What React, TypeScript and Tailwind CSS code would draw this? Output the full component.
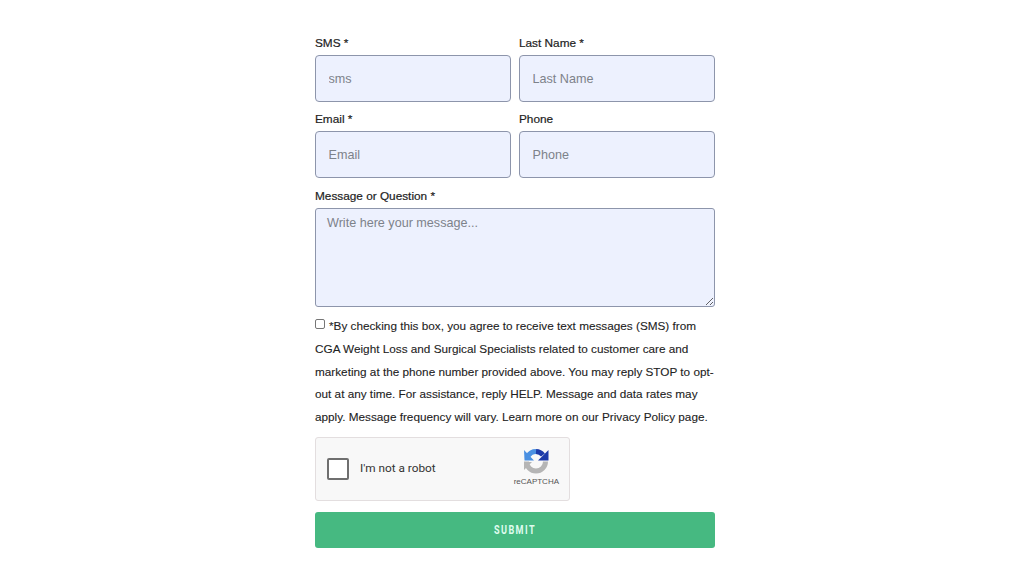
export default function App() {
  const label = "block text-[11.8px] leading-[14px] text-[#222] [-webkit-text-stroke:0.2px_#222]";
  const input = "mt-[5px] block w-full h-[47px] rounded-[4px] border-[1.5px] border-[#8d95ab] bg-[#edf1fe] pl-[12.5px] pr-[12px] text-[12.6px] text-[#333] placeholder:text-[#7d828a] outline-none";
  return (
    <div className="w-[1024px] h-[576px] bg-white flex justify-center overflow-hidden font-['Liberation_Sans',Arial,sans-serif]">
      <form className="w-[400px] pt-[36px] ml-[6px]">
        <div className="grid grid-cols-2 gap-x-[8px] gap-y-[10px]">
          <div>
            <label className={label}>SMS *</label>
            <input className={input} placeholder="sms" />
          </div>
          <div>
            <label className={label}>Last Name *</label>
            <input className={input} placeholder="Last Name" />
          </div>
          <div>
            <label className={label}>Email *</label>
            <input className={input} placeholder="Email" />
          </div>
          <div>
            <label className={label}>Phone</label>
            <input className={input} placeholder="Phone" />
          </div>
        </div>
        <label className={label + " mt-[11px]"}>Message or Question *</label>
        <textarea
          className="mt-[5px] block w-full h-[99px] rounded-[3px] border-[1.5px] border-[#8d95ab] bg-[#edf1fe] px-[11px] pt-[6px] text-[12.6px] leading-[17px] text-[#333] placeholder:text-[#7d828a] outline-none"
          placeholder="Write here your message..."
        />
        <p className="mt-[8px] text-[11.75px] leading-[22.8px] text-[#222] w-[404px] [-webkit-text-stroke:0.1px_#222]">
          <input type="checkbox" className="w-[10px] h-[10px] mr-[4px] align-[1px] inline-block appearance-none border border-[#767676] rounded-[2px] bg-white" />
          *By checking this box, you agree to receive text messages (SMS) from CGA Weight Loss and Surgical Specialists related to customer care and marketing at the phone number provided above. You may reply STOP to opt-out at any time. For assistance, reply HELP. Message and data rates may apply. Message frequency will vary. Learn more on our Privacy Policy page.
        </p>
        <div className="mt-[8px] w-[255px] h-[64px] rounded-[3px] border border-[#e3dedf] bg-[#f8f8f8] flex items-center pl-[11px] pr-[10px]">
          <div className="w-[22px] h-[22px] rounded-[2px] border-2 border-[#6f6f6f] bg-white" />
          <span className="ml-[11px] text-[11.8px] text-[#333] font-['Roboto',sans-serif]">I'm not a robot</span>
          <div className="ml-auto flex flex-col items-center -mt-[4px]">
            <svg width="28" height="28" viewBox="0 0 28 28">
              <path d="M4.5 14.5A9.5 9.5 0 0 0 23.5 14.5" fill="none" stroke="#b5b5b5" strokeWidth="5" />
              <path d="M2 15H10L2 23z" fill="#b5b5b5" />
              <path d="M14 4.5A9.5 9.5 0 0 0 6 9" fill="none" stroke="#4a90e2" strokeWidth="5" />
              <path d="M2 3L2.5 13.5H12z" fill="#4a90e2" />
              <path d="M14 4.5A9.5 9.5 0 0 1 21 8" fill="none" stroke="#1c3aa9" strokeWidth="5" />
              <path d="M26.5 3V13.5H16z" fill="#1c3aa9" />
            </svg>
            <span className="text-[8px] leading-[11px] text-[#555] mt-[1px]">reCAPTCHA</span>
          </div>
        </div>
        <button type="button" className="mt-[11px] block w-full h-[36px] rounded-[3px] bg-[#46b981] text-[#dffbee] text-[13px] font-bold tracking-[2px] font-['Roboto',sans-serif]">
          <span className="inline-block scale-x-[0.7]">SUBMIT</span>
        </button>
      </form>
    </div>
  );
}
